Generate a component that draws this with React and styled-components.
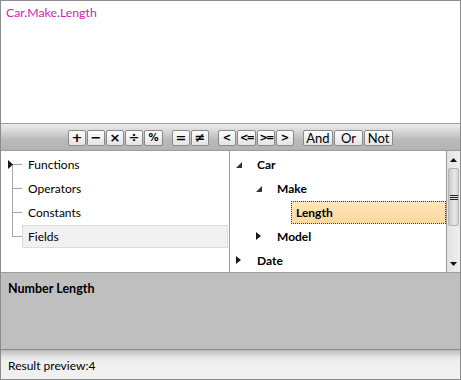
import React from "react";
import styled, { createGlobalStyle } from "styled-components";

const GlobalStyle = createGlobalStyle`
  html, body {
    margin: 0;
    padding: 0;
    background: #ffffff;
  }
  * {
    box-sizing: border-box;
  }
`;

const Window = styled.div`
  width: 461px;
  height: 380px;
  border: 1px solid #8c8c8c;
  display: flex;
  flex-direction: column;
  font-family: Lato, "Open Sans", sans-serif;
  font-size: 12px;
  color: #000;
  background: #fff;
  overflow: hidden;
`;

const Editor = styled.div`
  height: 122px;
  padding: 4px 5px;
  font-size: 12.3px;
  line-height: 16px;
  background: #fff;
`;

const Ident = styled.span`
  color: #d21cbb;
`;

const Dot = styled.span`
  color: #4a4a4a;
`;

const Toolbar = styled.div`
  height: 28px;
  border-top: 1px solid #9c9c9c;
  border-bottom: 1px solid #9c9c9c;
  background: linear-gradient(#ededed 0%, #d6d6d6 30%, #bababa 60%, #b3b3b3 100%);
  display: flex;
  align-items: center;
  justify-content: center;
  gap: 9px;
  padding-top: 2px;
`;

const Group = styled.div`
  display: flex;
  gap: 1px;
`;

const OpButton = styled.button`
  width: ${(p) => p.$w || 18}px;
  height: 16px;
  padding: 0;
  border: 1px solid #8a8a8a;
  border-radius: 2px;
  background: linear-gradient(#fdfdfd, #e4e4e4);
  font-family: ${(p) =>
    p.$word ? 'Lato, "Open Sans", sans-serif' : '"DejaVu Sans", sans-serif'};
  font-size: ${(p) => (p.$word ? "13px" : p.$small ? "10px" : "13px")};
  font-weight: ${(p) => (p.$word ? 400 : 700)};
  line-height: 14px;
  color: #000;
  display: flex;
  align-items: center;
  justify-content: center;
  letter-spacing: ${(p) => (p.$tight ? "-2px" : "0")};
`;

const Panels = styled.div`
  height: 122px;
  border-bottom: 1px solid #9c9c9c;
  display: flex;
`;

const LeftPane = styled.div`
  width: 229px;
  border-right: 1px solid #9c9c9c;
  padding-top: 1px;
`;

const RightPane = styled.div`
  flex: 1;
  display: flex;
  min-width: 0;
`;

const RightTree = styled.div`
  flex: 1;
  padding-top: 1px;
  min-width: 0;
`;

const Row = styled.div`
  height: 24px;
  display: flex;
  align-items: center;
  padding-left: ${(p) => (p.$indent || 0) * 20}px;
`;

const Branch = styled.div`
  position: relative;
  width: 21px;
  height: 100%;
  flex: none;

  &::before {
    content: "";
    position: absolute;
    left: 11px;
    width: 1px;
    background: #a6a6a6;
    top: ${(p) => (p.$first ? "12px" : "0")};
    height: ${(p) => (p.$first || p.$last ? "12px" : "24px")};
  }

  &::after {
    content: "";
    position: absolute;
    left: 11px;
    top: 12px;
    width: 10px;
    height: 1px;
    background: #a6a6a6;
  }
`;

const BranchArrow = styled.svg`
  position: absolute;
  left: 7px;
  top: 8px;
  z-index: 1;
`;

const LeftLabel = styled.div`
  flex: 1;
  height: 23px;
  margin-right: 1px;
  padding-left: 5px;
  display: flex;
  align-items: center;
  border: 1px solid ${(p) => (p.$selected ? "#dcdcdc" : "transparent")};
  background: ${(p) => (p.$selected ? "#f1f1f1" : "transparent")};
`;

const Expander = styled.div`
  width: 26px;
  height: 100%;
  flex: none;
  display: flex;
  align-items: center;
  padding-left: 6px;
`;

const FieldLabel = styled.div`
  flex: ${(p) => (p.$selected ? 1 : "none")};
  height: 23px;
  margin-left: ${(p) => (p.$selected ? "-5px" : "0")};
  padding-left: ${(p) => (p.$selected ? "4px" : "0")};
  display: flex;
  align-items: center;
  font-weight: 700;
  border: 1px dotted ${(p) => (p.$selected ? "#3a3a3a" : "transparent")};
  background: ${(p) =>
    p.$selected ? "linear-gradient(#fde6bd, #fbd89c)" : "transparent"};
`;

const ScrollBar = styled.div`
  width: 14px;
  border-left: 1px solid #9c9c9c;
  background: linear-gradient(90deg, #e2e2e2, #f0f0f0);
  display: flex;
  flex-direction: column;
`;

const ScrollButton = styled.div`
  height: 17px;
  display: flex;
  align-items: center;
  justify-content: center;
`;

const Thumb = styled.div`
  height: 58px;
  margin: 0 1px;
  border: 1px solid #b4b4b4;
  border-radius: 2px;
  background: linear-gradient(90deg, #c8c8c8, #e8e8e8 60%, #d4d4d4);
  display: flex;
  align-items: center;
  justify-content: center;
`;

const Track = styled.div`
  flex: 1;
`;

const Description = styled.div`
  height: 77px;
  background: #bfbfbf;
  border-bottom: 1px solid #8a8a8a;
  padding: 9px 7px;
  font-size: 12.5px;
  font-weight: 700;
  line-height: 14px;
`;

const StatusBar = styled.div`
  flex: 1;
  background: linear-gradient(#bcbcbc 0px, #e4e4e4 7px, #f0f0f0 12px);
  padding: 9px 7px 0;
  line-height: 14px;
`;

const Collapsed = () => (
  <svg width="5" height="8" viewBox="0 0 5 8">
    <path d="M0 0 L5 4 L0 8 Z" fill="#1a1a1a" />
  </svg>
);

const Expanded = () => (
  <svg width="6" height="6" viewBox="0 0 6 6" style={{ marginTop: 2 }}>
    <path d="M6 0 L6 6 L0 6 Z" fill="#333" />
  </svg>
);

const ops = [
  [
    { t: "+" },
    { t: "−" },
    { t: "×" },
    { t: "÷" },
    { t: "%", w: 19, small: true }
  ],
  [{ t: "=" }, { t: "≠" }],
  [
    { t: "<", small: true },
    { t: "<=", w: 19, tight: true, small: true },
    { t: ">=", tight: true, small: true },
    { t: ">", small: true }
  ],
  [
    { t: "And", w: 30, word: true },
    { t: "Or", w: 29, word: true },
    { t: "Not", w: 29, word: true }
  ]
];

const categories = ["Functions", "Operators", "Constants", "Fields"];

const fields = [
  { name: "Car", indent: 0, state: "open" },
  { name: "Make", indent: 1, state: "open" },
  { name: "Length", indent: 2, selected: true },
  { name: "Model", indent: 1, state: "closed" },
  { name: "Date", indent: 0, state: "closed" }
];

const App = () => {
  return (
    <>
      <GlobalStyle />
      <Window>
        <Editor>
          <Ident>Car</Ident>
          <Dot>.</Dot>
          <Ident>Make</Ident>
          <Dot>.</Dot>
          <Ident>Length</Ident>
        </Editor>

        <Toolbar>
          {ops.map((group, i) => (
            <Group key={i}>
              {group.map((op) => (
                <OpButton
                  key={op.t}
                  $w={op.w}
                  $word={op.word}
                  $tight={op.tight}
                  $small={op.small}
                >
                  {op.t}
                </OpButton>
              ))}
            </Group>
          ))}
        </Toolbar>

        <Panels>
          <LeftPane>
            {categories.map((c, i) => (
              <Row key={c}>
                <Branch $first={i === 0} $last={i === categories.length - 1}>
                  {i === 0 && (
                    <BranchArrow width="5" height="9" viewBox="0 0 5 9">
                      <path d="M0 0 L5 4.5 L0 9 Z" fill="#1a1a1a" />
                    </BranchArrow>
                  )}
                </Branch>
                <LeftLabel $selected={c === "Fields"}>{c}</LeftLabel>
              </Row>
            ))}
          </LeftPane>

          <RightPane>
            <RightTree>
              {fields.map((f) => (
                <Row key={f.name} $indent={f.indent}>
                  <Expander>
                    {f.state === "open" && <Expanded />}
                    {f.state === "closed" && <Collapsed />}
                  </Expander>
                  <FieldLabel $selected={f.selected}>{f.name}</FieldLabel>
                </Row>
              ))}
            </RightTree>
            <ScrollBar>
              <ScrollButton>
                <svg width="7" height="4" viewBox="0 0 7 4">
                  <path d="M0 4 L3.5 0 L7 4 Z" fill="#111" />
                </svg>
              </ScrollButton>
              <Thumb>
                <svg width="8" height="5" viewBox="0 0 8 5">
                  <path d="M0 0.5 H8 M0 2.5 H8 M0 4.5 H8" stroke="#222" strokeWidth="1" />
                </svg>
              </Thumb>
              <Track />
              <ScrollButton>
                <svg width="7" height="4" viewBox="0 0 7 4">
                  <path d="M0 0 L7 0 L3.5 4 Z" fill="#111" />
                </svg>
              </ScrollButton>
            </ScrollBar>
          </RightPane>
        </Panels>

        <Description>Number Length</Description>
        <StatusBar>Result preview:4</StatusBar>
      </Window>
    </>
  );
};

export default App;
